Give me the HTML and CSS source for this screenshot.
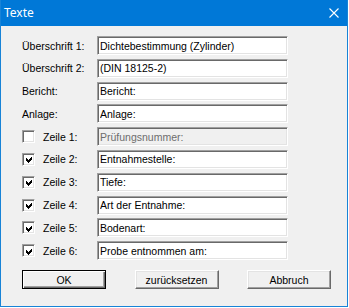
FILE: index.html
```html
<!DOCTYPE html>
<html lang="de">
<head>
    <meta charset="utf-8">
    <title>Texte</title>
    <link rel="stylesheet" href="styles.css">
</head>
<body>
    <div class="window">
        <div class="titlebar">
            <span class="title">Texte</span>
            <svg class="close" width="10" height="10" viewBox="0 0 10 10">
                <path d="M0.5 0.5 L9.5 9.5 M9.5 0.5 L0.5 9.5" stroke="#fff" stroke-width="1.1" fill="none"/>
            </svg>
        </div>
        <div class="content">
            <div class="rows">
                <div class="row">
                    <label class="label">Überschrift 1:</label>
                    <input class="field" type="text" value="Dichtebestimmung (Zylinder)">
                </div>
                <div class="row">
                    <label class="label">Überschrift 2:</label>
                    <input class="field" type="text" value="(DIN 18125-2)">
                </div>
                <div class="row">
                    <label class="label">Bericht:</label>
                    <input class="field" type="text" value="Bericht:">
                </div>
                <div class="row">
                    <label class="label">Anlage:</label>
                    <input class="field" type="text" value="Anlage:">
                </div>
                <div class="row">
                    <label class="label"><span class="check"></span>Zeile 1:</label>
                    <input class="field" type="text" value="Prüfungsnummer:" disabled>
                </div>
                <div class="row">
                    <label class="label"><span class="check"><svg width="9" height="9" viewBox="0 0 9 9"><polygon points="1,3 3,5 7,1 7,4 3,8 1,6" fill="#000" shape-rendering="crispEdges"/></svg></span>Zeile 2:</label>
                    <input class="field" type="text" value="Entnahmestelle:">
                </div>
                <div class="row">
                    <label class="label"><span class="check"><svg width="9" height="9" viewBox="0 0 9 9"><polygon points="1,3 3,5 7,1 7,4 3,8 1,6" fill="#000" shape-rendering="crispEdges"/></svg></span>Zeile 3:</label>
                    <input class="field" type="text" value="Tiefe:">
                </div>
                <div class="row">
                    <label class="label"><span class="check"><svg width="9" height="9" viewBox="0 0 9 9"><polygon points="1,3 3,5 7,1 7,4 3,8 1,6" fill="#000" shape-rendering="crispEdges"/></svg></span>Zeile 4:</label>
                    <input class="field" type="text" value="Art der Entnahme:">
                </div>
                <div class="row">
                    <label class="label"><span class="check"><svg width="9" height="9" viewBox="0 0 9 9"><polygon points="1,3 3,5 7,1 7,4 3,8 1,6" fill="#000" shape-rendering="crispEdges"/></svg></span>Zeile 5:</label>
                    <input class="field" type="text" value="Bodenart:">
                </div>
                <div class="row">
                    <label class="label"><span class="check"><svg width="9" height="9" viewBox="0 0 9 9"><polygon points="1,3 3,5 7,1 7,4 3,8 1,6" fill="#000" shape-rendering="crispEdges"/></svg></span>Zeile 6:</label>
                    <input class="field" type="text" value="Probe entnommen am:">
                </div>
            </div>
            <div class="buttons">
                <button class="btn default">OK</button>
                <button class="btn">zurücksetzen</button>
                <button class="btn">Abbruch</button>
            </div>
        </div>
    </div>
</body>
</html>
```

FILE: styles.css
```css
body {
    margin: 0;
    padding: 0;
    background: #fff;
    font-family: "Liberation Sans", Arial, sans-serif;
    font-size: 10.5px;
    color: #000;
}
.window {
    box-sizing: border-box;
    width: 348px;
    height: 307px;
    border: 1px solid #1883d7;
    border-top: none;
    background: #f0f0f0;
    display: flex;
    flex-direction: column;
}
.titlebar {
    height: 26px;
    background: #0078d7;
    display: flex;
    align-items: center;
    justify-content: space-between;
    padding: 0 8px 0 3px;
}
.title {
    color: #fff;
    font-family: "Noto Sans", "Open Sans", sans-serif;
    font-size: 12px;
    margin-top: -1px;
}
.close {
    display: block;
}
.content {
    padding: 10px 0 0 21px;
}
.rows {
    display: flex;
    flex-direction: column;
    gap: 3.8px;
}
.row {
    display: flex;
    align-items: center;
    height: 19px;
}
.label {
    width: 75px;
    display: flex;
    align-items: center;
    white-space: nowrap;
}
.check {
    box-sizing: border-box;
    width: 13px;
    height: 13px;
    margin-right: 8px;
    background: #fff;
    border-top: 1px solid #a0a0a0;
    border-left: 1px solid #a0a0a0;
    border-right: 1px solid #fff;
    border-bottom: 1px solid #fff;
    box-shadow: inset 1px 1px #696969, inset -1px -1px #e3e3e3;
    display: flex;
    align-items: center;
    justify-content: center;
}
.check svg {
    display: block;
    margin: 1px 0 0 1px;
}
.field {
    box-sizing: border-box;
    width: 191px;
    height: 19px;
    margin: 0;
    padding: 0 0 0 2px;
    font-family: "Liberation Sans", Arial, sans-serif;
    font-size: 10.5px;
    color: #000;
    background: #fff;
    border-top: 1px solid #a0a0a0;
    border-left: 1px solid #a0a0a0;
    border-right: 1px solid #fff;
    border-bottom: 1px solid #fff;
    box-shadow: inset 1px 1px #696969, inset -1px -1px #e3e3e3;
    outline: none;
    appearance: none;
}
.field:disabled {
    background: #f0f0f0;
    color: #6d6d6d;
}
.buttons {
    margin-top: 10px;
    width: 309px;
    display: flex;
    justify-content: space-between;
}
.btn {
    box-sizing: border-box;
    width: 84px;
    height: 19px;
    margin: 0;
    padding: 0;
    font-family: "Liberation Sans", Arial, sans-serif;
    font-size: 10.5px;
    color: #000;
    background: #f0f0f0;
    border: 1px solid;
    border-color: #fff #696969 #696969 #fff;
    box-shadow: inset -1px -1px #a0a0a0, inset 1px 1px #e3e3e3;
}
.btn.default {
    border-color: #000;
    box-shadow: inset 1px 1px #fff, inset -1px -1px #696969, inset -2px -2px #a0a0a0;
}
```
